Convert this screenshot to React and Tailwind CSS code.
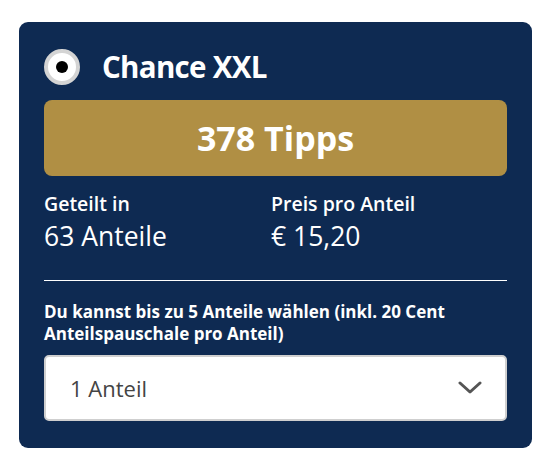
export default function App() {
    const shares = ['1 Anteil', '2 Anteile', '3 Anteile', '4 Anteile', '5 Anteile']

    return (
        <div className="bg-white w-[541px] h-[468px] pt-[22px] pl-[19px]">
            <div className="w-[513px] h-[426px] bg-[#0e2a52] rounded-[9px] px-[25px] pt-[27px] text-white" style={{ fontFamily: '"Open Sans", Arial, sans-serif' }}>
                {/* header */}
                <div className="flex items-center">
                    <span className="w-[36px] h-[36px] rounded-full bg-white border-[4px] border-[#d4d4d4] flex items-center justify-center">
                        <span className="w-[12px] h-[12px] rounded-full bg-black" />
                    </span>
                    <h2 className="ml-[22px] text-[29.5px] leading-none font-bold tracking-[-0.7px] [font-stretch:89%]">Chance XXL</h2>
                </div>

                <div className="mt-[15px] h-[76px] rounded-[8px] bg-[#b08f44] flex items-center justify-center">
                    <span className="text-[34px] font-bold [font-stretch:92%]">378 Tipps</span>
                </div>

                {/* info */}
                <div className="flex mt-[16px]">
                    <div className="w-[227px]">
                        <p className="text-[19.5px] font-semibold leading-[24px]">Geteilt in</p>
                        <p className="text-[26.5px] font-medium mt-[5px] leading-[31px]">63 Anteile</p>
                    </div>
                    <div>
                        <p className="text-[19.5px] font-semibold leading-[24px]">Preis pro Anteil</p>
                        <p className="text-[26.5px] font-medium mt-[5px] leading-[31px]">€ 15,20</p>
                    </div>
                </div>

                <div className="h-px bg-white mt-[28px]" />

                <p className="mt-[20px] text-[17px] font-bold leading-[22px]">Du kannst bis zu 5 Anteile wählen (inkl. 20 Cent Anteilspauschale pro Anteil)</p>

                <div className="relative mt-[10px]">
                    <select defaultValue="1 Anteil" className="appearance-none w-full h-[66px] bg-white border-2 border-[#cfcfcf] rounded-[5px] pl-[24px] text-[22px] text-[#444] outline-none">
                        {shares.map((s) => (
                            <option key={s} value={s}>{s}</option>
                        ))}
                    </select>
                    <svg className="absolute right-[25px] top-[26px] pointer-events-none" width="24" height="14" viewBox="0 0 24 14" fill="none">
                        <path d="M2 2 L12 11 L22 2" stroke="#555" strokeWidth="3" strokeLinecap="round" strokeLinejoin="round" />
                    </svg>
                </div>
            </div>
        </div>
    )
}
